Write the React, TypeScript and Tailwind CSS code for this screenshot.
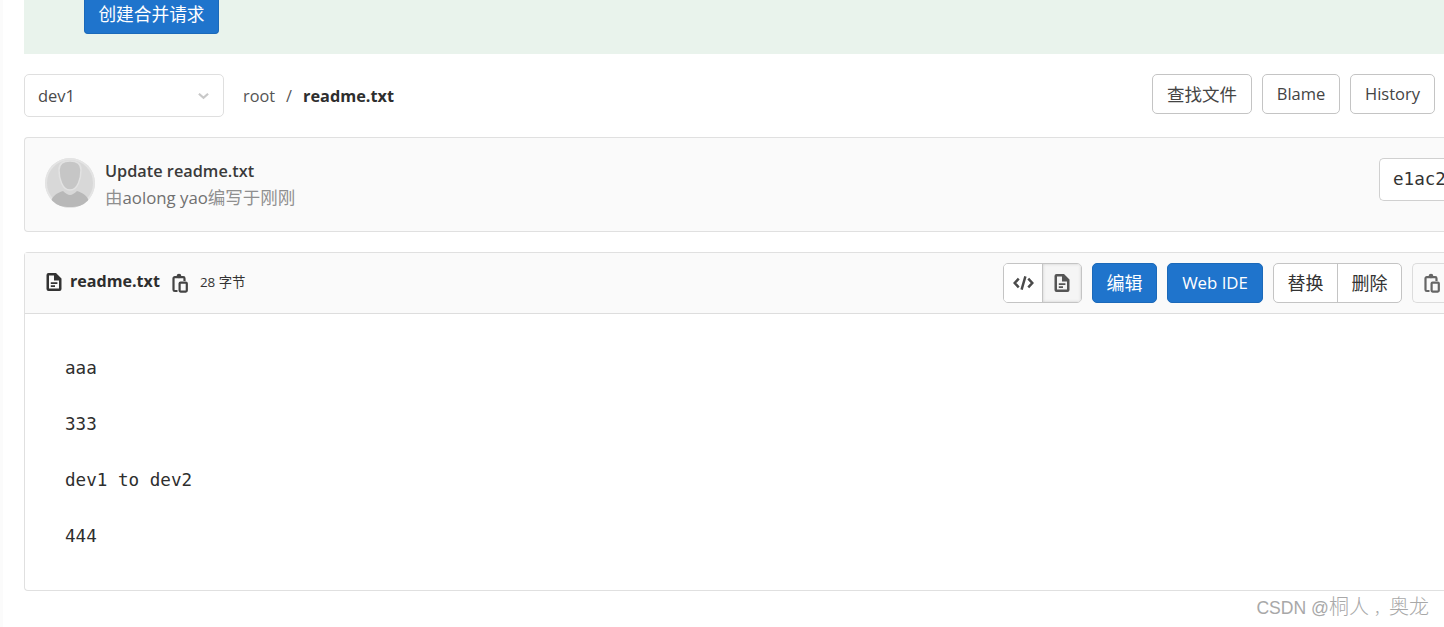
const sans = { fontFamily: '"Open Sans", "Noto Sans CJK SC", sans-serif' };

function CopyIcon({ className }: { className: string }) {
  return (
    <svg viewBox="0 0 16 20" className={className} fill="none" stroke="currentColor" strokeWidth="2.2">
      <path d="M5.5 18H2.8a1.3 1.3 0 0 1-1.3-1.3V5.5a1.3 1.3 0 0 1 1.3-1.3h8.4a1.3 1.3 0 0 1 1.3 1.3V8" />
      <circle cx="7" cy="3" r="1.6" fill="currentColor" strokeWidth="1.4" />
      <rect x="7.6" y="9.6" width="7.2" height="9" rx="1" />
    </svg>
  );
}

function FileIcon({ className }: { className: string }) {
  return (
    <svg viewBox="0 0 16 18" className={className} fill="currentColor">
      <path fillRule="evenodd" d="M2.5 0H10l5.5 5.5V16a2 2 0 0 1-2 2H2.5a2 2 0 0 1-2-2V2a2 2 0 0 1 2-2zM3 2.5v13h10V7.5H8V2.5H3zM4.8 9.2h6.6V11H4.8zM4.8 12.3h4.2v1.8H4.8z" />
    </svg>
  );
}

function Avatar() {
  return (
    <div className="w-[50px] h-[50px] rounded-full bg-[#dedede] overflow-hidden shrink-0">
      <svg viewBox="0 0 50 50" className="w-full h-full">
        <circle cx="25" cy="25" r="24" fill="#d8d8d8" stroke="#e4e4e4" strokeWidth="2" />
        <path d="M6 44c1-6 6-9 12-11 2 2 5 4 7 4s5-2 7-4c6 2 11 5 12 11-5 4-12 5-19 5s-14-1-19-5z" fill="#b8b8b8" />
        <path d="M25 3c7 0 11 3 11 9 0 8-3 20-11 20S14 20 14 12c0-6 4-9 11-9z" fill="#c6c6c6" stroke="#e2e2e2" strokeWidth="1.5" />
      </svg>
    </div>
  );
}

export default function App() {
  return (
    <div className="w-[1444px] h-[627px] overflow-hidden bg-white text-[#333] border-l-[3px] border-[#fbfbfb]" style={sans}>
      <div className="ml-[21px]">
        <div className="h-[54px] bg-[#e9f3ec] pl-[60px]">
          <button className="w-[135px] h-[34px] bg-[#1f74cc] border border-[#1b69b9] border-t-0 rounded-b-[4px] text-white text-[17.7px] leading-[26px] pb-[5px]">
            创建合并请求
          </button>
        </div>

        <div className="flex items-start h-[63px] pt-[20px]">
          <div className="w-[200px] h-[43px] border border-[#dfdfdf] rounded-[5px] flex items-center justify-between pl-[13px] pr-[14px] pt-[1px] text-[16.5px] text-[#4a4a4a]">
            <span>dev1</span>
            <svg viewBox="0 0 12 8" className="w-[11px] h-[8px] text-[#c8c8c8]" fill="none" stroke="currentColor" strokeWidth="2.4">
              <path d="M1 1.5l5 4.5 5-4.5" />
            </svg>
          </div>
          <div className="flex items-center h-[43px] ml-[19px] pt-[1px] text-[16.3px]">
            <span className="text-[#555]">root</span>
            <span className="mx-[11px] text-[#555]">/</span>
            <span className="font-bold text-[#2e2e2e]">readme.txt</span>
          </div>
          <div className="ml-auto mr-[9px] flex gap-[10px] text-[16.5px] text-[#444]">
            <button className="w-[100px] h-[40px] border border-[#c4c4c4] rounded-[5px] text-[17.5px]">查找文件</button>
            <button className="w-[78px] h-[40px] border border-[#c4c4c4] rounded-[5px] pt-[1px]">Blame</button>
            <button className="w-[85px] h-[40px] border border-[#c4c4c4] rounded-[5px] pt-[1px]">History</button>
          </div>
        </div>

        <div className="mt-[20px] h-[95px] bg-[#fafafa] border border-[#e0e0e0] border-r-0 rounded-l-[4px] flex items-start pt-[20px] pl-[20px]">
          <Avatar />
          <div className="ml-[10px]">
            <div className="text-[16.3px] leading-[26px] font-semibold text-[#3a3a3a]">Update readme.txt</div>
            <div className="text-[17.5px] leading-[26px] text-[#8f8f8f]">
              由<span className="text-[#707070] text-[16.8px]">aolong yao</span>编写于刚刚
            </div>
          </div>
          <div className="ml-auto w-[65px] h-[43px] bg-white border border-r-0 border-[#d0d0d0] rounded-l-[5px] pl-[13px] overflow-hidden leading-[41px] text-[17.6px] text-[#333]" style={{ fontFamily: '"DejaVu Sans Mono", monospace' }}>
            e1ac2
          </div>
        </div>

        <div className="mt-[20px] h-[339px] border border-[#e0e0e0] border-r-0 rounded-l-[4px]">
          <div className="h-[61px] bg-[#fafafa] border-b border-[#dddddd] flex items-center pl-[21px]">
            <FileIcon className="w-[16px] h-[18px] text-[#333] -mt-[3px]" />
            <span className="ml-[8px] text-[16.1px] font-bold text-[#2e2e2e] -mt-[4px]">readme.txt</span>
            <CopyIcon className="ml-[12px] w-[16px] h-[20px] text-[#444]" />
            <span className="ml-[12px] text-[13.4px] text-[#333] -mt-[2px]">28 字节</span>
            <div className="ml-auto flex items-center">
              <div className="flex w-[79px] h-[40px] border border-[#c4c4c4] rounded-[5px] overflow-hidden">
                <div className="w-[39px] bg-white border-r border-[#c4c4c4] flex items-center justify-center text-[#4a4a4a]">
                  <svg viewBox="0 0 22 16" className="w-[21px] h-[16px]" fill="none" stroke="currentColor" strokeWidth="2.6">
                    <path d="M6 3.5L1.8 8 6 12.5M16 3.5L20.2 8 16 12.5M13 1L9 15" />
                  </svg>
                </div>
                <div className="flex-1 bg-[#f5f5f5] shadow-[inset_0_0_3px_#cccccc] flex items-center justify-center">
                  <FileIcon className="w-[16px] h-[18px] text-[#555]" />
                </div>
              </div>
              <button className="ml-[10px] w-[65px] h-[40px] bg-[#1f74cc] border border-[#1b69b9] rounded-[5px] text-white text-[18px]">编辑</button>
              <button className="ml-[10px] w-[96px] h-[40px] bg-[#1f74cc] border border-[#1b69b9] rounded-[5px] text-white text-[16.8px]">Web IDE</button>
              <div className="ml-[10px] flex w-[129px] h-[40px] border border-[#c4c4c4] rounded-[5px] bg-white text-[18px] text-[#333] overflow-hidden">
                <div className="w-[64px] border-r border-[#c4c4c4] flex items-center justify-center">替换</div>
                <div className="flex-1 flex items-center justify-center">删除</div>
              </div>
              <div className="ml-[10px] w-[32px] h-[40px] bg-[#fafafa] border border-r-0 border-[#dcdcdc] rounded-l-[5px] flex items-center pl-[11px] text-[#666]">
                <CopyIcon className="w-[16px] h-[20px] shrink-0" />
              </div>
            </div>
          </div>
          <div className="pt-[40px] pl-[40px] text-[17.6px] leading-[28px] text-[#2e2e2e] whitespace-pre" style={{ fontFamily: '"DejaVu Sans Mono", monospace' }}>
            {"aaa\n\n333\n\ndev1 to dev2\n\n444"}
          </div>
        </div>

        <div className="flex justify-end items-center pr-[15px] pt-[3px] text-[17.6px] leading-[26px] text-[#a8a8a8]" style={{ fontFamily: '"Liberation Sans", "Noto Sans CJK SC", sans-serif' }}>
          <span>CSDN @</span>
          <span className="text-[20px] font-light">桐人<span className="text-[15px] pl-[5px]">，</span>奥龙</span>
        </div>
      </div>
    </div>
  );
}
